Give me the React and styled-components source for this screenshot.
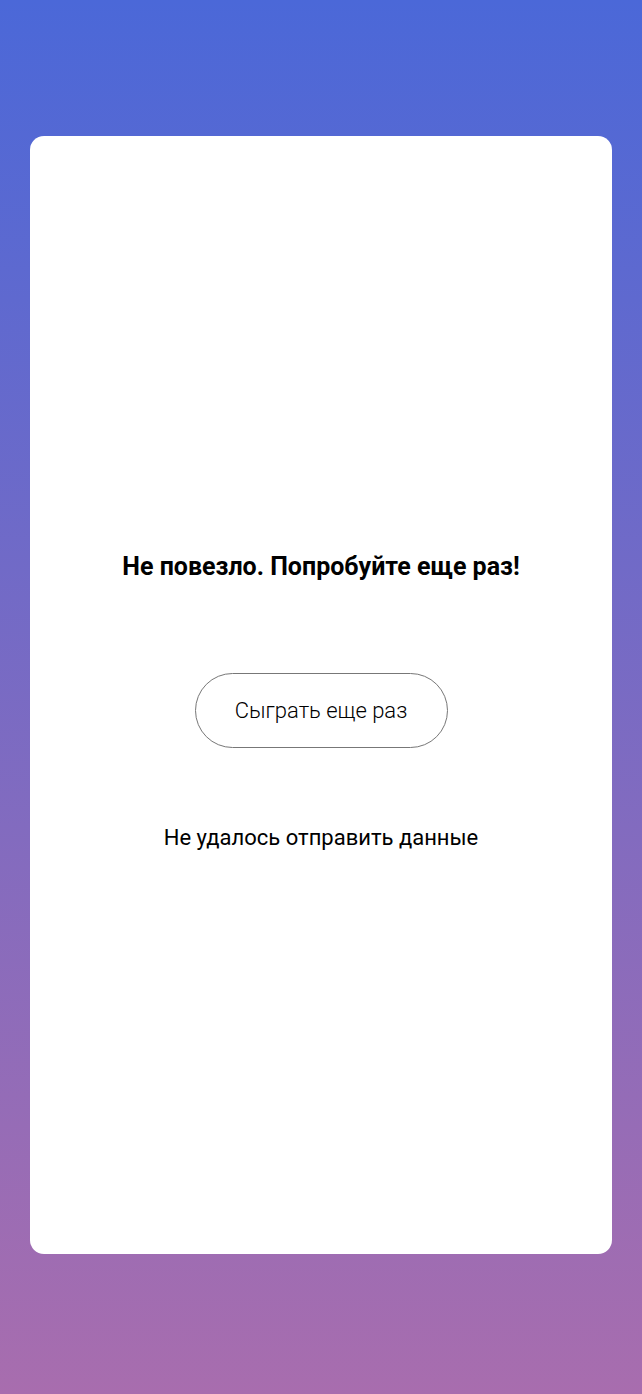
import React from "react";
import styled, { createGlobalStyle } from "styled-components";

const Global = createGlobalStyle`
  html, body { margin: 0; padding: 0; }
  body {
    font-family: Roboto, "Noto Sans", "Liberation Sans", sans-serif;
    background: #a66dae;
  }
`;

const Page = styled.div`
  min-height: 1394px;
  box-sizing: border-box;
  padding: 136px 30px 140px;
  background: linear-gradient(180deg, #4b68d8 0%, #a86dae 100%);
`;

const Card = styled.main`
  height: 1118px;
  box-sizing: border-box;
  background: #ffffff;
  border-radius: 14px;
  display: flex;
  flex-direction: column;
  align-items: center;
  padding-top: 416px;
`;

const Title = styled.h1`
  margin: 0;
  font-size: 25px;
  line-height: 30px;
  font-weight: 700;
  color: #000;
`;

const Button = styled.button`
  margin-top: 91px;
  width: 253px;
  height: 75px;
  border: 1px solid #777777;
  border-radius: 38px;
  background: #fff;
  font-family: Roboto, "Noto Sans", sans-serif;
  font-weight: 300;
  font-size: 22px;
  color: #000;
  cursor: pointer;
`;

const Message = styled.p`
  margin: 77px 0 0;
  font-size: 22px;
  line-height: 26px;
  font-weight: 400;
  color: #000;
`;

export default function App() {
  return (
    <>
      <Global />
      <Page>
        <Card>
          <Title>Не повезло. Попробуйте еще раз!</Title>
          <Button>Сыграть еще раз</Button>
          <Message>Не удалось отправить данные</Message>
        </Card>
      </Page>
    </>
  );
}
